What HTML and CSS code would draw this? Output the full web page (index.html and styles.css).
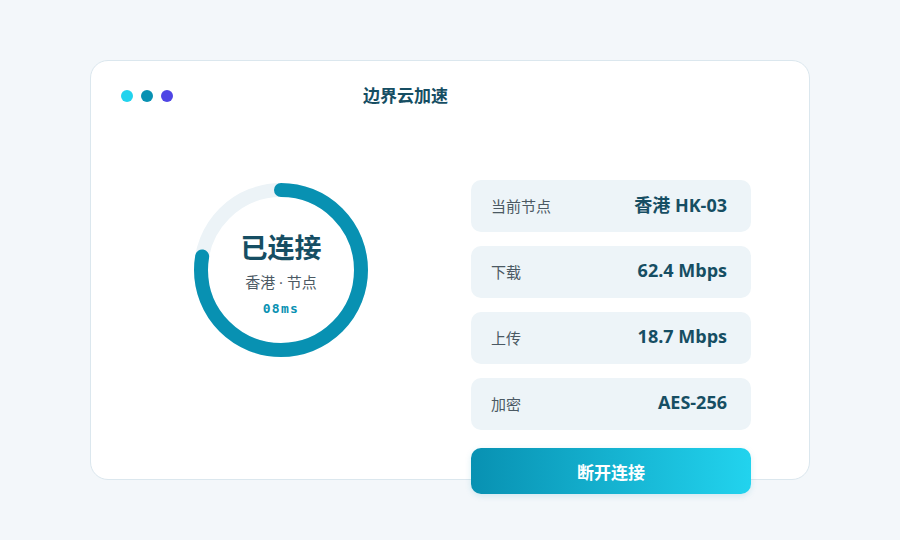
FILE: index.html
```html
<!DOCTYPE html>
<html lang="zh-CN">
<head>
    <meta charset="UTF-8">
    <title>边界云加速</title>
    <link rel="stylesheet" href="styles.css">
</head>
<body>

    <div class="card">
        <div class="header">
            <div class="dots">
                <span class="dot dot-a"></span>
                <span class="dot dot-b"></span>
                <span class="dot dot-c"></span>
            </div>
            <h1 class="title">边界云加速</h1>
        </div>

        <div class="main">
            <!-- 连接状态环 -->
            <div class="status-col">
                <div class="ring">
                    <svg width="180" height="180" viewBox="0 0 180 180">
                        <circle class="ring-track" cx="90" cy="90" r="80"></circle>
                        <circle class="ring-bar" cx="90" cy="90" r="80" stroke-dasharray="390 503" transform="rotate(-90 90 90)"></circle>
                    </svg>
                    <div class="ring-text">
                        <div class="state">已连接</div>
                        <div class="node">香港 · 节点</div>
                        <div class="ping">08ms</div>
                    </div>
                </div>
            </div>

            <!-- 信息列表 -->
            <div class="info-col">
                <div class="row"><span class="label">当前节点</span><span class="value">香港 HK-03</span></div>
                <div class="row"><span class="label">下载</span><span class="value">62.4 Mbps</span></div>
                <div class="row"><span class="label">上传</span><span class="value">18.7 Mbps</span></div>
                <div class="row"><span class="label">加密</span><span class="value">AES-256</span></div>
                <button class="btn-disconnect">断开连接</button>
            </div>
        </div>
    </div>

</body>
</html>
```

FILE: styles.css
```css
/* 页面背景 */
body {
    margin: 0;
    background: #f3f7fa;
    font-family: "Open Sans", "Noto Sans CJK SC", sans-serif;
    padding: 60px 90px;
}

/* 卡片 */
.card {
    box-sizing: border-box;
    width: 720px;
    height: 420px;
    background: #fff;
    border: 1px solid #dbe7ee;
    border-radius: 18px;
}

/* 顶部 */
.header {
    display: flex;
    align-items: center;
    padding: 25px 30px 0;
    height: 20px;
}

.dots {
    display: flex;
    gap: 8px;
}

.dot {
    width: 12px;
    height: 12px;
    border-radius: 50%;
}

.dot-a { background: #22d3ee; }
.dot-b { background: #0891b2; }
.dot-c { background: #4f46e5; }

.title {
    margin: 0 0 0 190px;
    font-size: 17px;
    font-weight: 700;
    line-height: 20px;
    color: #164e63;
}

/* 主体 */
.main {
    display: grid;
    grid-template-columns: 320px 280px;
    gap: 30px;
    padding: 74px 0 0 30px;
}

.status-col {
    display: flex;
    justify-content: center;
}

.ring {
    position: relative;
    width: 180px;
    height: 180px;
}

.ring svg {
    display: block;
}

.ring-track {
    fill: none;
    stroke: #ecf3f7;
    stroke-width: 14;
}

.ring-bar {
    fill: none;
    stroke: #0891b2;
    stroke-width: 14;
    stroke-linecap: round;
}

.ring-text {
    position: absolute;
    inset: 0;
    display: flex;
    flex-direction: column;
    align-items: center;
    justify-content: center;
    padding-top: 9px;
}

.state {
    font-size: 27px;
    font-weight: 700;
    line-height: 32px;
    color: #164e63;
}

.node {
    margin-top: 8px;
    font-size: 15px;
    line-height: 20px;
    color: #4b5963;
}

.ping {
    margin-top: 8px;
    font-family: "DejaVu Sans Mono", monospace;
    font-size: 13px;
    font-weight: 700;
    line-height: 18px;
    letter-spacing: 1.3px;
    color: #0891b2;
}

/* 信息行 */
.info-col {
    display: flex;
    flex-direction: column;
    gap: 14px;
}

.row {
    display: flex;
    justify-content: space-between;
    align-items: center;
    height: 52px;
    padding: 0 24px 0 20px;
    background: #edf4f8;
    border-radius: 10px;
}

.label {
    font-size: 15px;
    color: #4b5963;
    margin-bottom: 1px;
}

.value {
    font-size: 18px;
    font-weight: 700;
    color: #164e63;
    margin-bottom: 4px;
}

/* 按钮 */
.btn-disconnect {
    margin-top: 4px;
    height: 46px;
    border: none;
    border-radius: 10px;
    background: linear-gradient(90deg, #0891b2, #22d3ee);
    color: #fff;
    font-family: inherit;
    font-size: 17px;
    font-weight: 700;
    cursor: pointer;
    box-shadow: 0 2px 6px rgba(8, 145, 178, 0.15);
}
```
